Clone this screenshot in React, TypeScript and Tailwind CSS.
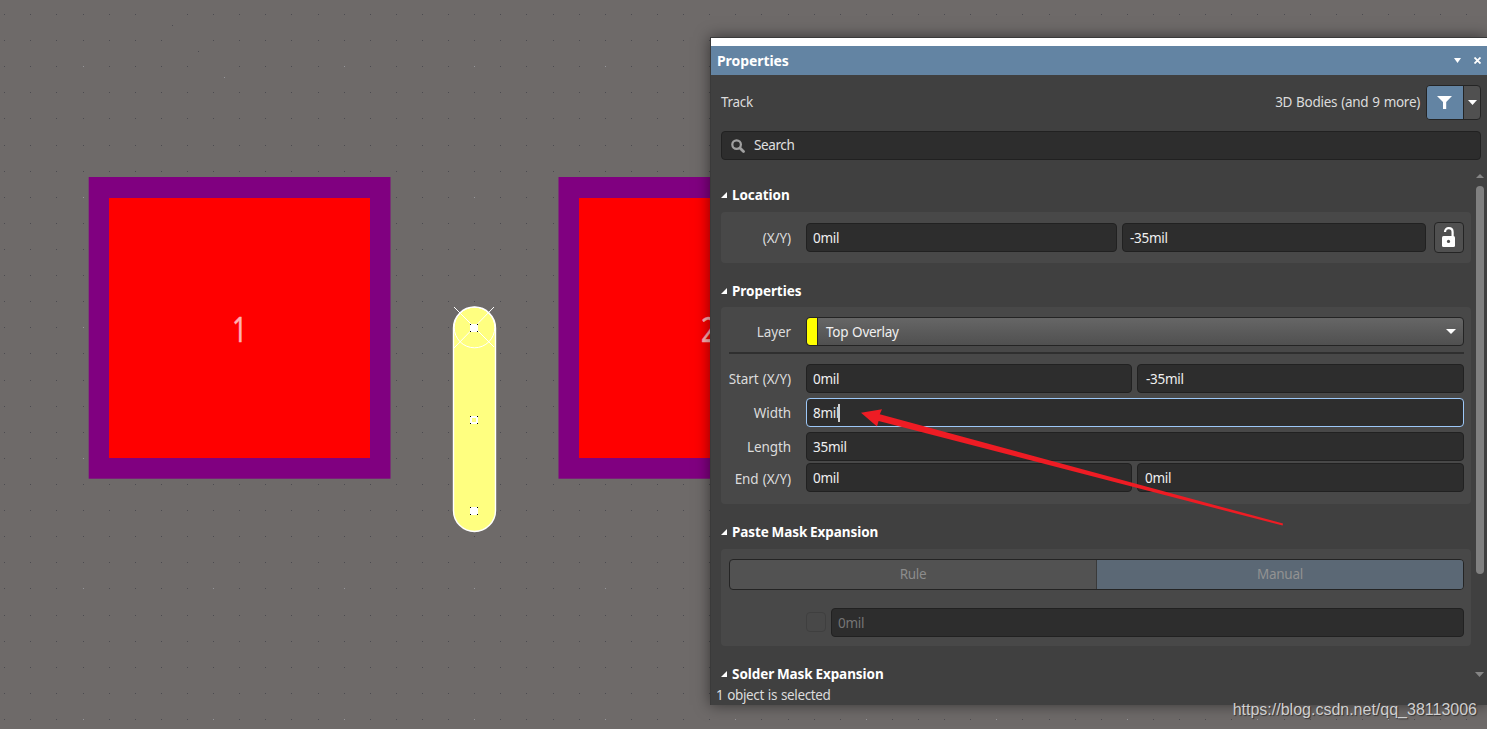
import type { ReactNode } from "react";
import clsx from "clsx";

const GRID = 26.11;

// a few grid points sit off their regular place
const SHIFTED = ["6-0", "7-1", "8-2"];

const gridDots = Array.from({ length: 57 * 28 }, (_, i) => {
    const col = i % 57;
    const row = Math.floor(i / 57);
    const off = SHIFTED.includes(`${col}-${row}`) ? 11 : 0;
    return {
        x: Math.round(4.2 + col * GRID) + off,
        y: Math.round(14 + row * GRID) + off,
        major: col % 5 === 3 && row % 5 === 2,
    };
});

const handles = [
    { y: 324, hollow: false },
    { y: 416, hollow: true },
    { y: 507, hollow: false },
];

function Board() {
    return (
        <svg className="absolute inset-0" width="1487" height="729" viewBox="0 0 1487 729">
            {gridDots.map((d, i) => (
                <rect key={i} x={d.x} y={d.y} width="1" height="1" fill={d.major ? "#96969a" : "#4c4b50"} />
            ))}

            {/* Pads */}
            <rect x="88.7" y="177" width="301.8" height="301.7" fill="#800080" />
            <rect x="109" y="198" width="261" height="260" fill="#ff0000" />
            <rect x="558.5" y="177" width="302" height="301.7" fill="#800080" />
            <rect x="579" y="198" width="261" height="260" fill="#ff0000" />
            <g fill="#ffb0b0" stroke="#ffb0b0" strokeWidth="0.4" fontFamily="Noto Sans" fontSize="35">
                <text transform="translate(232 342) scale(0.76 1)">1</text>
                <text transform="translate(701 342) scale(0.76 1)">2</text>
            </g>

            {/* Selected track */}
            <rect x="453.5" y="307" width="42" height="224.5" rx="21" fill="#ffff80" stroke="#ffffff" strokeWidth="1.4" />
            <circle cx="474.5" cy="327.5" r="20.3" fill="none" stroke="#ffffff" />
            <path d="M454 307l40 40M494 307l-40 41" stroke="#ffffff" strokeWidth="1" />
            {handles.map((h) => (
                <g key={h.y}>
                    <rect x="470" y={h.y} width="8" height="8" fill="#ffffff" />
                    {h.hollow && <rect x="472" y={h.y + 2} width="4" height="4" fill="#ffff80" />}
                    <path
                        d={`M470 ${h.y}h1v1h-1zM477 ${h.y}h1v1h-1zM470 ${h.y + 7}h1v1h-1zM477 ${h.y + 7}h1v1h-1z`}
                        fill="#000000"
                    />
                </g>
            ))}
        </svg>
    );
}

function Caret({ className }: { className?: string }) {
    return (
        <svg className={className} viewBox="0 0 10 5" fill="currentColor" preserveAspectRatio="none">
            <path d="M0 0h10L5 5z" />
        </svg>
    );
}

function Field({ value, className, focused }: { value: string; className?: string; focused?: boolean }) {
    return (
        <div
            className={clsx(
                "flex h-[29px] items-center rounded border bg-[#2d2d2d] pl-1.5 text-[#f0f0f0]",
                focused ? "border-[#9dc8f8]" : "border-[#212121]",
                className
            )}
        >
            <span>{value}</span>
            {focused && <span className="-ml-px h-[18px] w-0.5 bg-[#d0d0d0]" />}
        </div>
    );
}

function Row({ label, className, children }: { label: string; className?: string; children: ReactNode }) {
    return (
        <div className={clsx("flex items-center", className)}>
            <span className="mr-[15px] flex w-[62px] shrink-0 justify-end tracking-[-0.08px] whitespace-nowrap">{label}</span>
            {children}
        </div>
    );
}

function Heading({ title }: { title: string }) {
    return (
        <div className="flex h-5 items-center text-[13.5px] font-bold tracking-[-0.06px] text-white [word-spacing:-0.7px]">
            <svg className="mr-[5px] h-1.5 w-1.5" viewBox="0 0 6 6" fill="currentColor">
                <path d="M6 0v6H0z" />
            </svg>
            {title}
        </div>
    );
}

export default function App() {
    return (
        <div className="relative flex h-[729px] w-[1487px] flex-col items-end overflow-hidden bg-[#6e6a69] font-['Noto_Sans','Open_Sans',sans-serif] text-[13.5px] leading-5 tracking-[-0.28px] text-[#dcdcdc] [word-spacing:0.7px]">
            <Board />

            {/* Properties panel */}
            <div className="relative mt-[37px] flex h-[668px] w-[777px] flex-col border-t border-l border-[#3a3a3a] bg-[#404040] shadow-[0_0_14px_rgba(0,0,0,0.5)]">
                <div className="h-2 bg-white" />
                <div className="flex h-[29px] items-center bg-[#6384a3] pr-1.5 pl-1.5 text-white">
                    <span className="text-sm font-bold tracking-[-0.08px]">Properties</span>
                    <Caret className="mr-[13px] ml-auto h-[5px] w-[7px]" />
                    <svg className="h-[7px] w-[7px]" viewBox="0 0 7 7" stroke="currentColor" strokeWidth="1.8">
                        <path d="M.5.5l6 6M6.5.5l-6 6" />
                    </svg>
                </div>

                <div className="mt-2.5 flex h-[35px] items-center pr-1.5 pl-2.5">
                    <span className="pb-0.5">Track</span>
                    <span className="mr-1.5 ml-auto pb-0.5 tracking-[-0.28px]">3D Bodies (and 9 more)</span>
                    <div className="flex h-[35px] w-[55px] overflow-hidden rounded border border-[#242424] bg-[#505050] text-white">
                        <div className="flex w-[37px] items-center justify-center border-r border-[#242424] bg-[#6384a3] pr-px">
                            <svg className="h-[13px] w-[15px]" viewBox="0 0 15 13" fill="currentColor">
                                <path d="M0 0h15L9.2 6v7H6V6z" />
                            </svg>
                        </div>
                        <div className="flex flex-1 items-center justify-center">
                            <Caret className="h-[5px] w-[9px]" />
                        </div>
                    </div>
                </div>

                <div className="mt-[11px] mr-1.5 ml-2.5 flex h-[29px] shrink-0 items-center rounded border border-[#212121] bg-[#2d2d2d] pl-[9px] text-[#e0e0e0]">
                    <svg className="mt-px mr-[9px] h-3.5 w-3.5 text-[#a0a0a0]" viewBox="0 0 15 15" fill="none" stroke="currentColor">
                        <circle cx="6" cy="6" r="4.6" strokeWidth="2.4" />
                        <path d="M9.6 9.6l3.8 3.8" strokeWidth="3" strokeLinecap="round" />
                    </svg>
                    <span className="pb-0.5 tracking-[-0.4px]">Search</span>
                </div>

                <div className="flex h-[524px] shrink-0">
                    <div className="ml-2.5 w-[750px] pt-[25px]">
                        <Heading title="Location" />
                        <div className="mt-[7px] flex h-[51px] items-center rounded bg-[#484848] pr-[7px] pl-2">
                            <Row label="(X/Y)">
                                <Field value="0mil" className="w-[311px]" />
                                <Field value="-35mil" className="ml-[5px] w-[304px] pl-[7px]" />
                                <div className="ml-2 flex h-[31px] w-[30px] items-center justify-center rounded border border-[#242424] bg-[#505050] pr-px pb-px text-white">
                                    <svg className="h-5 w-[13px]" viewBox="0 0 13 20">
                                        <path
                                            d="M3 5C3 -0.4 10.6 0 10.6 5v4.5"
                                            fill="none"
                                            stroke="currentColor"
                                            strokeWidth="2.2"
                                        />
                                        <rect y="9" width="13" height="11" rx="1.5" fill="currentColor" />
                                        <circle cx="6.5" cy="14.4" r="1.6" fill="#505050" />
                                    </svg>
                                </div>
                            </Row>
                        </div>

                        <div className="mt-[18px]">
                            <Heading title="Properties" />
                        </div>
                        <div className="mt-1.5 h-[197px] rounded bg-[#484848] pt-2.5 pr-[7px] pl-2">
                            <Row label="Layer">
                                <div className="flex h-[29px] flex-1 items-center overflow-hidden rounded border border-[#242424] bg-linear-to-b from-[#666666] to-[#505050] text-[#f0f0f0]">
                                    <div className="mr-2 h-full w-[11px] rounded-l-[3px] border-r border-[#242424] bg-[#ffff00]" />
                                    Top Overlay
                                    <Caret className="mr-[7px] ml-auto h-[5px] w-2.5 text-white" />
                                </div>
                            </Row>
                            <div className="mt-1.5 mb-2.5 h-0.5 bg-[#2f2f2f]" />
                            <Row label="Start (X/Y)">
                                <Field value="0mil" className="w-[326px]" />
                                <Field value="-35mil" className="ml-[5px] flex-1 pl-2" />
                            </Row>
                            <Row label="Width" className="mt-[5px]">
                                <Field value="8mil" className="flex-1" focused />
                            </Row>
                            <Row label="Length" className="mt-[5px]">
                                <Field value="35mil" className="flex-1" />
                            </Row>
                            <Row label="End (X/Y)" className="mt-0.5 [&>span]:pt-0.5">
                                <Field value="0mil" className="w-[326px]" />
                                <Field value="0mil" className="ml-[5px] flex-1 pl-[7px]" />
                            </Row>
                        </div>

                        <div className="mt-[18px]">
                            <Heading title="Paste Mask Expansion" />
                        </div>
                        <div className="mt-[7px] h-[97px] rounded bg-[#484848] pt-2.5 pr-[7px] pl-2 text-[#8c8c8c]">
                            <div className="flex h-[31px] overflow-hidden rounded border border-[#242424] bg-[#525252]">
                                <div className="flex w-[367px] items-center justify-center border-r border-[#3a3a3a] pb-0.5">Rule</div>
                                <div className="flex flex-1 items-center justify-center bg-[#5b6875] pb-0.5 text-[#929292]">Manual</div>
                            </div>
                            <div className="mt-[18px] flex items-start pl-[77px] text-[#757575]">
                                <div className="mt-1 mr-[5px] h-5 w-5 rounded border border-[#3f3f3f]" />
                                <Field value="0mil" className="flex-1 text-[#757575]!" />
                            </div>
                        </div>

                        <div className="mt-[18px]">
                            <Heading title="Solder Mask Expansion" />
                        </div>
                    </div>

                    {/* Scrollbar */}
                    <div className="ml-1 flex w-[9px] flex-col items-center pt-3.5 text-[#858585]">
                        <Caret className="h-1 w-2 rotate-180" />
                        <div className="mt-2 h-[388px] w-2 rounded-full bg-[#808080]" />
                        <Caret className="mt-[98px] h-[5px] w-[9px]" />
                    </div>
                </div>

                <div className="mt-px pl-[5px] tracking-[-0.36px]">1 object is selected</div>
            </div>

            {/* Pointer arrow */}
            <svg className="absolute inset-0" width="1487" height="729" viewBox="0 0 1487 729">
                <path d="M861 412.7L882 409.2L879.8 414.2L1283 523.6L1282.6 525.6L878.6 421L877 426.6z" fill="#ee1c24" />
            </svg>

            <span className="absolute right-2.5 bottom-[7px] font-['Liberation_Sans',sans-serif] text-base tracking-normal text-[#cfcfcf] [text-shadow:1px_1px_1px_rgba(0,0,0,0.5)]">
                https://blog.csdn.net/qq_38113006
            </span>
        </div>
    );
}
